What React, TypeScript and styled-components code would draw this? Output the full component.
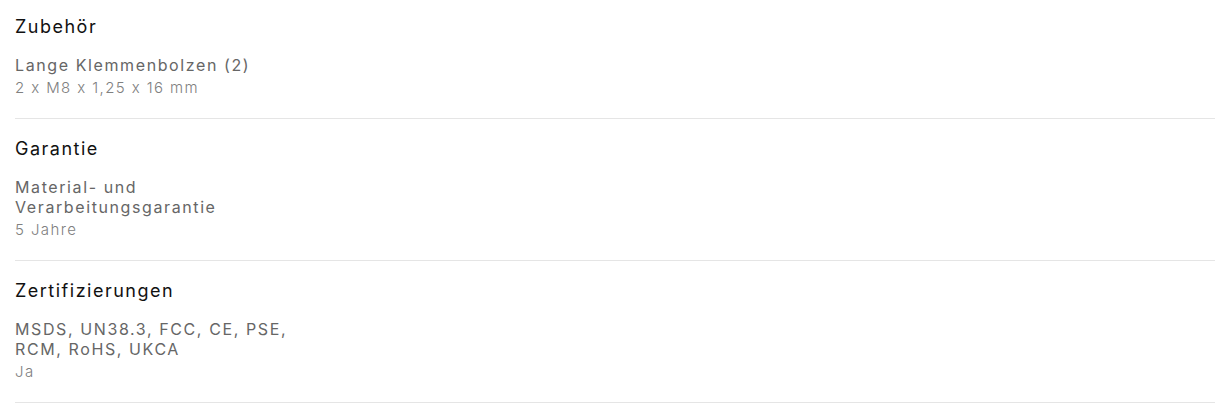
import React from 'react'
import styled, { createGlobalStyle } from 'styled-components'

const GlobalStyle = createGlobalStyle`
  html, body {
    margin: 0;
    padding: 0;
    background: #fff;
  }
  body {
    font-family: Inter, "Open Sans", "Liberation Sans", sans-serif;
    font-feature-settings: "calt" 0;
    -webkit-font-smoothing: antialiased;
  }
`

const SpecList = styled.div`
  display: flex;
  flex-direction: column;
  padding: 0 15px;
`

const SpecSection = styled.section`
  display: flex;
  flex-direction: column;
  padding: 18px 0 20px;
  border-bottom: 1px solid #e5e5e5;

  &:first-child {
    padding-top: 15px;
  }
`

const SpecTitle = styled.h3`
  margin: 0 0 16px;
  font-size: 18px;
  line-height: 24px;
  font-weight: 400;
  letter-spacing: 1.5px;
  color: #111;
`

const SpecRow = styled.div`
  display: flex;
  flex-direction: column;
  gap: 3px;
  max-width: 290px;
`

const SpecLabel = styled.span`
  font-size: 16px;
  line-height: 20px;
  letter-spacing: 1.6px;
  color: #666;
`

const SpecValue = styled.span`
  font-size: 15px;
  line-height: 20px;
  font-weight: 300;
  letter-spacing: 1.4px;
  color: #808080;
`

const specs = [
  { title: 'Zubehör', label: 'Lange Klemmenbolzen (2)', value: '2 x M8 x 1,25 x 16 mm' },
  { title: 'Garantie', label: 'Material- und Verarbeitungsgarantie', value: '5 Jahre' },
  {
    title: 'Zertifizierungen',
    label: 'MSDS, UN38.3, FCC, CE, PSE, RCM, RoHS, UKCA',
    value: 'Ja',
  },
]

const App = () => (
  <>
    <GlobalStyle />
    <SpecList>
      {specs.map((s) => (
        <SpecSection key={s.title}>
          <SpecTitle>{s.title}</SpecTitle>
          <SpecRow>
            <SpecLabel>{s.label}</SpecLabel>
            <SpecValue>{s.value}</SpecValue>
          </SpecRow>
        </SpecSection>
      ))}
    </SpecList>
  </>
)

export default App
